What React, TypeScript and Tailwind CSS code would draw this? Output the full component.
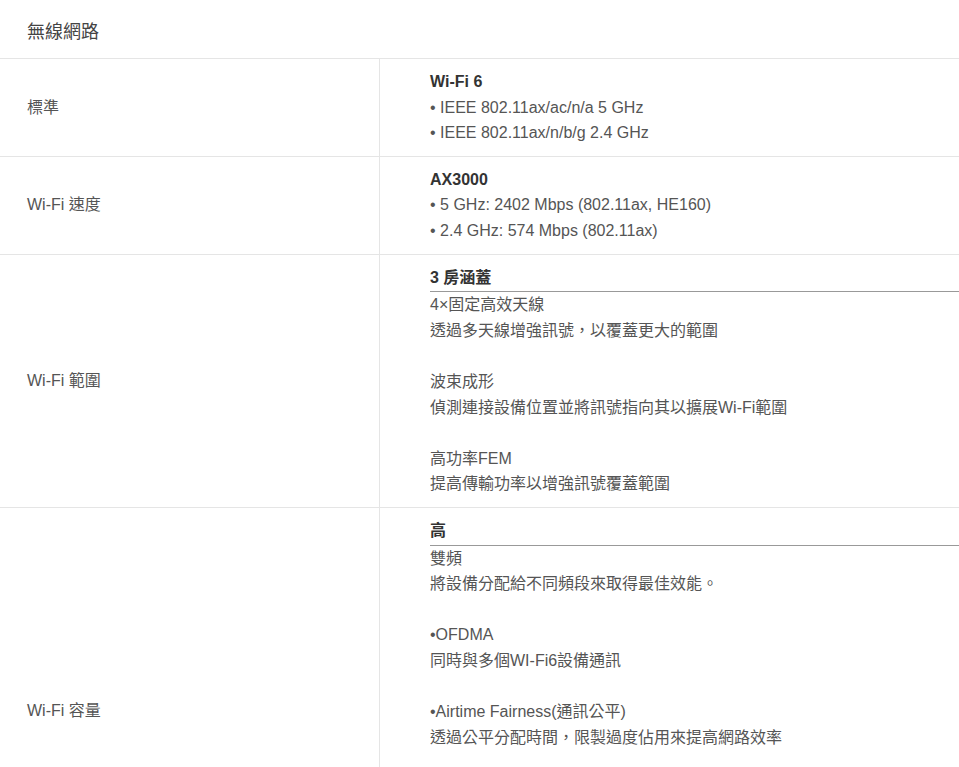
import React from "react";

type Row = {
  label: string;
  heading: string;
  underline?: boolean;
  lines: string[];
};

const rows: Row[] = [
  {
    label: "標準",
    heading: "Wi-Fi 6",
    lines: ["• IEEE 802.11ax/ac/n/a 5 GHz", "• IEEE 802.11ax/n/b/g 2.4 GHz"],
  },
  {
    label: "Wi-Fi 速度",
    heading: "AX3000",
    lines: ["• 5 GHz: 2402 Mbps (802.11ax, HE160)", "• 2.4 GHz: 574 Mbps (802.11ax)"],
  },
  {
    label: "Wi-Fi 範圍",
    heading: "3 房涵蓋",
    underline: true,
    lines: [
      "4×固定高效天線",
      "透過多天線增強訊號，以覆蓋更大的範圍",
      "",
      "波束成形",
      "偵測連接設備位置並將訊號指向其以擴展Wi-Fi範圍",
      "",
      "高功率FEM",
      "提高傳輸功率以增強訊號覆蓋範圍",
    ],
  },
  {
    label: "Wi-Fi 容量",
    heading: "高",
    underline: true,
    lines: [
      "雙頻",
      "將設備分配給不同頻段來取得最佳效能。",
      "",
      "•OFDMA",
      "同時與多個WI-Fi6設備通訊",
      "",
      "•Airtime Fairness(通訊公平)",
      "透過公平分配時間，限製過度佔用來提高網路效率",
      "",
      "•MU-MIMO",
      "同時與多個設備傳輸資料",
      "",
      "•1024-QAM",
      "提升資料傳輸效率",
    ],
  },
];

export default function App() {
  return (
    <div
      className="w-full bg-white text-[#555] text-[16px] leading-[1.6]"
      style={{ fontFamily: '"Liberation Sans", Arial, "Noto Sans CJK TC", sans-serif' }}
    >
      <div className="h-[59px] flex items-center pt-[7px] pl-[27px] border-b border-[#e5e5e5] text-[18px] text-[#444]">
        無線網路
      </div>
      {rows.map((r, i) => (
        <div key={i} className="flex border-b border-[#e5e5e5]">
          <div className="w-[380px] shrink-0 flex items-center pl-[27px] border-r border-[#e5e5e5]">
            {r.label}
          </div>
          <div className="flex-1 pl-[50px] pt-[10px] pb-[10px]">
            {r.underline ? (
              <div className="font-bold text-[#333] border-b border-[#999] pb-[1px]">{r.heading}</div>
            ) : (
              <div className="font-bold text-[#333]">{r.heading}</div>
            )}
            {r.lines.map((l, j) => (
              <div key={j} className="min-h-[25.6px]">
                {l}
              </div>
            ))}
          </div>
        </div>
      ))}
    </div>
  );
}
